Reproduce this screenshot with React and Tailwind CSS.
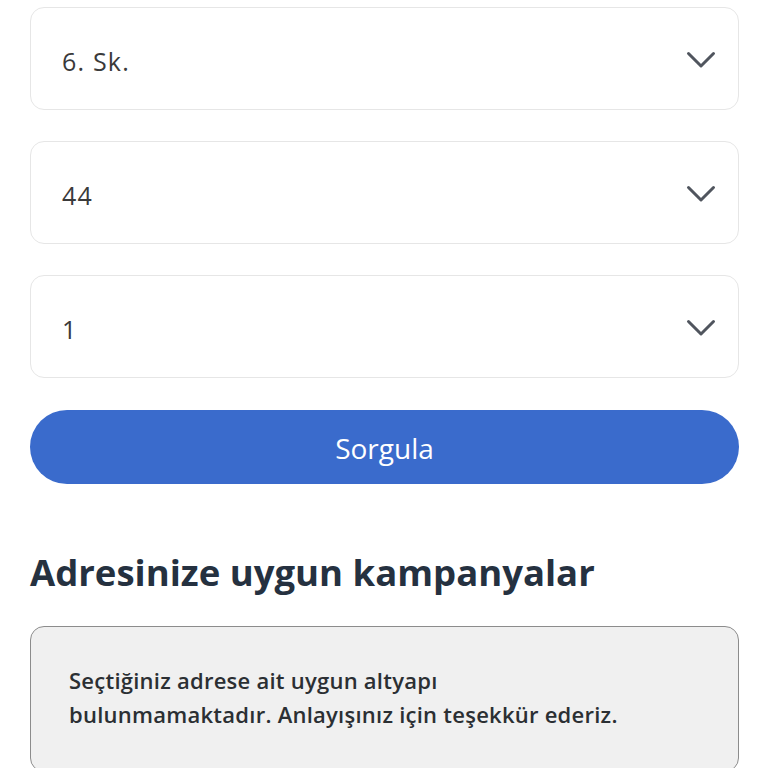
const fields = ["6. Sk.", "44", "1"];

const Chevron = () => (
  <svg width="32" height="20" viewBox="0 0 32 20" fill="none" className="text-[#50555e]">
    <path d="M3.5 3.5 L16 16 L28.5 3.5" stroke="currentColor" strokeWidth="3" strokeLinecap="round" strokeLinejoin="round" />
  </svg>
);

const SelectBox = ({ value }) => (
  <div className="flex items-center justify-between h-[103px] rounded-[14px] border border-[#e6e6e6] bg-white pl-[31px] pr-[21px]">
    <span className="pt-[6px] text-[25px] tracking-[1.2px] text-[#3a3a3a]">{value}</span>
    <div className="pt-[2px]">
      <Chevron />
    </div>
  </div>
);

export default function App() {
  return (
    <div className="bg-white min-h-[768px] h-[768px] overflow-hidden pl-[30px] pr-[29px] pt-[7px]" style={{ fontFamily: "'Open Sans', sans-serif" }}>
      {/* Address selects */}
      <div className="flex flex-col gap-[31px]">
        {fields.map((f) => (
          <SelectBox key={f} value={f} />
        ))}
      </div>

      <button className="mt-[32px] w-full h-[74px] rounded-full bg-[#3a6bcc] text-white text-[28px] pt-[2px]">
        Sorgula
      </button>

      <h2 className="mt-[70px] text-[36.5px] font-bold text-[#253140] leading-none">
        Adresinize uygun kampanyalar
      </h2>

      <div className="mt-[35px] rounded-[14px] border border-[#8c8c8c] bg-[#f0f0f0] pl-[38px] pr-[30px] pt-[36px] pb-[40px]">
        <p className="text-[22px] font-semibold tracking-[0.25px] text-[#2b2f33] leading-[34px]">
          Seçtiğiniz adrese ait uygun altyapı
          <br />
          bulunmamaktadır. Anlayışınız için teşekkür ederiz.
        </p>
      </div>
    </div>
  );
}
